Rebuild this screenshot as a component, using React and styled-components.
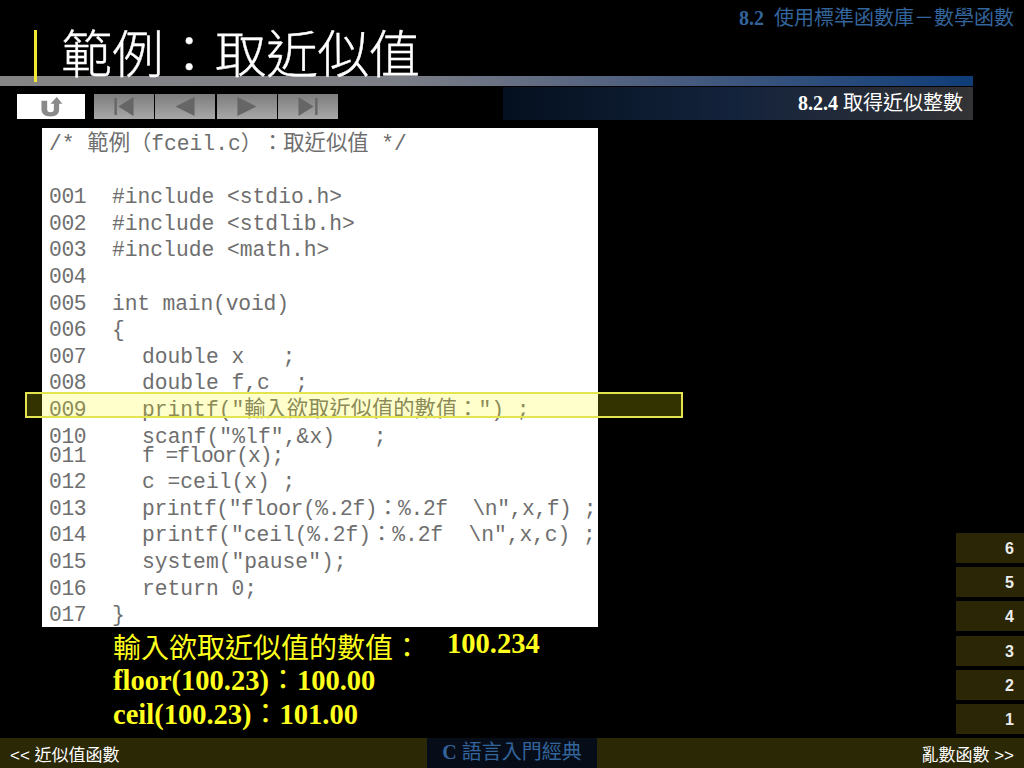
import React from 'react';
import styled, { createGlobalStyle } from 'styled-components';

const cjk = '"Noto Sans CJK TC", "Noto Sans CJK SC"';
const serif = `"Liberation Serif", ${cjk}, serif`;

const GlobalStyle = createGlobalStyle`
  html, body {
    margin: 0;
    padding: 0;
    background: #000;
  }
`;

const Slide = styled.div`
  position: relative;
  width: 1024px;
  height: 768px;
  display: flex;
  flex-direction: column;
  overflow: hidden;
  background: #000;
  font-family: ${serif};
  text-spacing-trim: space-all;
`;

const Header = styled.header`
  height: 76px;
`;

const Chapter = styled.div`
  height: 30px;
  padding-right: 10px;
  text-align: right;
  font-size: 20px;
  line-height: 36px;
  white-space: pre;
  color: #33649b;
`;

const Num = styled.b`
  font-family: "Liberation Serif", serif;
  font-weight: 700;
`;

const Title = styled.h1`
  position: relative;
  z-index: 1;
  height: 52px;
  margin: 0 0 0 34px;
  padding-left: 24px;
  border-left: 3px solid #f0e832;
  font-size: 51.3px;
  font-weight: 300;
  -webkit-text-stroke: 0.4px #fff;
  line-height: 52px;
  color: #fff;
  white-space: nowrap;
`;

const Rule = styled.div`
  width: 973px;
  height: 10px;
  background: linear-gradient(90deg, #858585 0%, #7d7f86 40%, #50607f 65%, #0f3d78 100%);
`;

const Toolbar = styled.div`
  width: 973px;
  height: 33px;
  margin-top: 1px;
  display: flex;
  justify-content: space-between;
`;

const NavGroup = styled.nav`
  display: flex;
  gap: 1px;
  padding: 7px 0 0 17px;
`;

const HomeButton = styled.div`
  width: 68px;
  height: 25px;
  margin-right: 8px;
  display: flex;
  align-items: center;
  justify-content: center;
  background: #fff;
`;

const NavButton = styled.div`
  width: 60px;
  height: 25px;
  margin-left: ${p => (p.$wide ? '1px' : '0')};
  display: flex;
  align-items: center;
  justify-content: center;
  background: linear-gradient(180deg, #7d7d7d 0%, #a8a8a8 100%);
`;

const SectionBar = styled.div`
  width: 470px;
  padding-right: 10px;
  box-sizing: border-box;
  text-align: right;
  font-size: 20px;
  line-height: 33px;
  white-space: pre;
  color: #fff;
  background: linear-gradient(90deg, #04101f 0%, #14233c 50%, #333335 100%);
`;

const Body = styled.main`
  flex: 1;
  margin-top: 8px;
  padding: 0 0 4px 42px;
  display: flex;
  justify-content: space-between;
  align-items: flex-end;
  min-height: 0;
`;

const Column = styled.div`
  align-self: flex-start;
  display: flex;
  flex-direction: column;
`;

const CodePanel = styled.div`
  width: 556px;
  height: 499px;
  box-sizing: border-box;
  padding: 3px 0 0 7px;
  overflow: hidden;
  background: #fff;
  font-family: "Liberation Mono", ${cjk}, monospace;
  font-size: 21.3px;
  line-height: 26.6px;
  color: #6e6e6e;
`;

const CodeLine = styled.div`
  display: flex;
  height: 26.6px;
  white-space: pre;
  margin-top: ${p => (p.$tight ? '-7.6px' : '0')};
`;

const LineNo = styled.span`
  width: 63px;
  flex: none;
  letter-spacing: -0.4px;
`;

const LineText = styled.span`
  padding-left: ${p => (p.$indent ? '30px' : '0')};
  letter-spacing: ${p => p.$spacing || 0}px;
`;

const Output = styled.div`
  padding-left: 71px;
  padding-top: 3px;
  font-size: 28.5px;
  font-weight: 700;
  color: #ffff1e;
  white-space: pre;
`;

const OutputLine = styled.div`
  height: 34px;
  line-height: 34px;
`;

const PromptLine = styled(OutputLine)`
  display: flex;
  align-items: flex-start;
`;

const OutputCjk = styled.span`
  font-size: 28px;
  font-weight: 400;
`;

const Prompt = styled(OutputCjk)`
  margin-top: 2px;
`;

const Answer = styled.span`
  margin: -3px 0 0 26px;
`;

const PageStack = styled.div`
  width: 68px;
  display: flex;
  flex-direction: column;
  gap: 4.2px;
`;

const PageItem = styled.div`
  height: 30px;
  padding-right: 10px;
  text-align: right;
  font-family: "Liberation Sans", sans-serif;
  font-size: 16px;
  font-weight: 700;
  line-height: 31px;
  color: #ececec;
  background: #2b2706;
`;

const Footer = styled.footer`
  height: 30px;
  display: grid;
  grid-template-columns: 427px 170px 1fr;
  background: #2b2806;
  color: #fff;
  font-size: 17px;
  line-height: 35px;
`;

const FooterPrev = styled.div`
  padding-left: 10px;
  font-family: "Liberation Sans", ${cjk}, sans-serif;
`;

const FooterBrand = styled.div`
  text-align: center;
  font-size: 20px;
  line-height: 28px;
  color: #33649b;
  background: #060d18;
`;

const FooterNext = styled.div`
  padding-right: 10px;
  text-align: right;
  font-family: "Liberation Sans", ${cjk}, sans-serif;
`;

const Highlight = styled.div`
  position: absolute;
  left: 25px;
  top: 392px;
  width: 658px;
  height: 26px;
  box-sizing: border-box;
  border: 2px solid #e4e450;
  background: rgba(255, 255, 0, 0.2);
`;

const Glyph = styled.svg`
  display: block;
  width: 24px;
  height: 21px;
  fill: ${p => p.$fill || '#666'};
`;

const lines = [
  { no: '001', text: '#include <stdio.h>' },
  { no: '002', text: '#include <stdlib.h>' },
  { no: '003', text: '#include <math.h>' },
  { no: '004', text: '' },
  { no: '005', text: 'int main(void)', spacing: -0.15 },
  { no: '006', text: '{' },
  { no: '007', text: 'double x   ;', indent: true },
  { no: '008', text: 'double f,c  ;', indent: true },
  { no: '009', text: 'printf("輸入欲取近似值的數值：") ;', indent: true },
  { no: '010', text: 'scanf("%lf",&x)   ;', indent: true, spacing: 0.1 },
  { no: '011', text: 'f =floor(x);', indent: true, tight: true, spacing: -1 },
  { no: '012', text: 'c =ceil(x) ;', indent: true },
  { no: '013', text: 'printf("floor(%.2f)：%.2f  \\n",x,f) ;', indent: true, spacing: -0.4 },
  { no: '014', text: 'printf("ceil(%.2f)：%.2f  \\n",x,c) ;', indent: true, spacing: -0.06 },
  { no: '015', text: 'system("pause");', indent: true },
  { no: '016', text: 'return 0;', indent: true },
  { no: '017', text: '}' },
];

const App = () => {
  return (
    <Slide lang="zh-TW">
      <GlobalStyle />
      <Header>
        <Chapter><Num>8.2</Num>{'  使用標準函數庫－數學函數'}</Chapter>
        <Title>範例：取近似值</Title>
      </Header>
      <Rule />
      <Toolbar>
        <NavGroup>
          <HomeButton>
            <Glyph viewBox="0 0 24 22" $fill="#8a8a8a">
              <path d="M2 5h6v9c0 2 1 3 3.500 3s3.500-1 3.500-3V8h-3.500L18 1l6 7h-3.500v6.500C20.500 19 17 21.500 11.500 21.500S2 19 2 14.500z" />
            </Glyph>
          </HomeButton>
          <NavButton>
            <Glyph viewBox="0 0 24 22"><path d="M2 2h2.500v18H2zM22 1v20L6 11z" /></Glyph>
          </NavButton>
          <NavButton>
            <Glyph viewBox="0 0 24 22"><path d="M22 1v20L2 11z" /></Glyph>
          </NavButton>
          <NavButton $wide>
            <Glyph viewBox="0 0 24 22"><path d="M2 1v20l20-10z" /></Glyph>
          </NavButton>
          <NavButton>
            <Glyph viewBox="0 0 24 22"><path d="M2 1v20l16-10zM19.500 2H22v18h-2.500z" /></Glyph>
          </NavButton>
        </NavGroup>
        <SectionBar><Num>8.2.4</Num>{' 取得近似整數'}</SectionBar>
      </Toolbar>
      <Body>
        <Column>
          <CodePanel>
            <CodeLine>{'/* 範例（fceil.c）：取近似值 */'}</CodeLine>
            <CodeLine />
            {lines.map(line => (
              <CodeLine key={line.no} $tight={line.tight}>
                <LineNo>{line.no}</LineNo>
                <LineText $indent={line.indent} $spacing={line.spacing}>{line.text}</LineText>
              </CodeLine>
            ))}
          </CodePanel>
          <Output>
            <PromptLine><Prompt>輸入欲取近似值的數值：</Prompt><Answer>100.234</Answer></PromptLine>
            <OutputLine>floor(100.23)<OutputCjk>：</OutputCjk>100.00</OutputLine>
            <OutputLine>ceil(100.23)<OutputCjk>：</OutputCjk>101.00</OutputLine>
          </Output>
        </Column>
        <PageStack>
          {[6, 5, 4, 3, 2, 1].map(n => (
            <PageItem key={n}>{n}</PageItem>
          ))}
        </PageStack>
      </Body>
      <Footer>
        <FooterPrev>{'<< 近似值函數'}</FooterPrev>
        <FooterBrand><Num>C</Num> 語言入門經典</FooterBrand>
        <FooterNext>{'亂數函數 >>'}</FooterNext>
      </Footer>
      <Highlight />
    </Slide>
  );
};

export default App;
